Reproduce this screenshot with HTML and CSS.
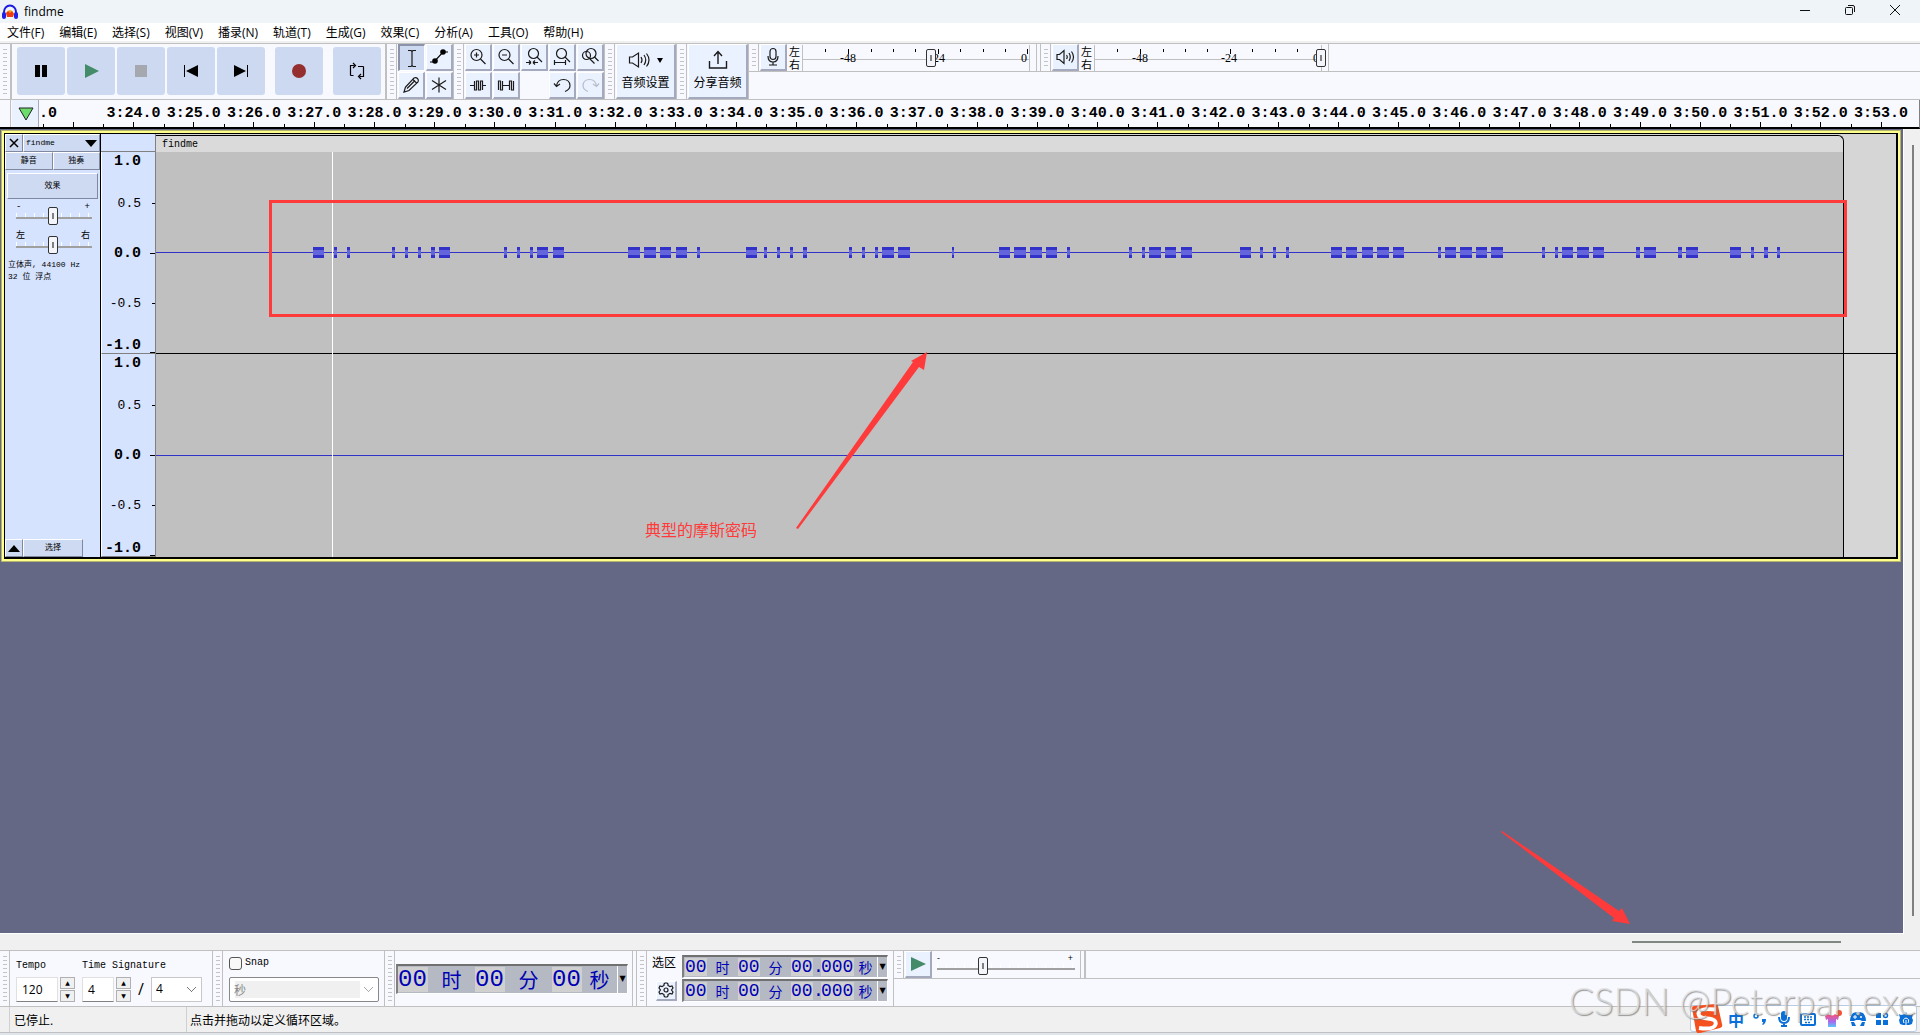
FILE: index.html
```html
<!DOCTYPE html>
<html lang="zh-CN">
<head>
<meta charset="utf-8">
<title>findme</title>
<link rel="stylesheet" href="styles.css">
</head>
<body>
<header class="titlebar">
  <svg class="logo" viewBox="0 0 16 16" width="16" height="16"><path d="M2 10V8a6 6.500 0 0 1 12 0v2" fill="none" stroke="#1c1ce0" stroke-width="2"/><path d="M4 10q4-8 8 0z" fill="#f8a020"/><path d="M4 9l2-2 2 2 2-2 2 3-1 3H5z" fill="#f03c10"/><rect x="0" y="8" width="4" height="7" rx="2" fill="#2020e8"/><rect x="12" y="8" width="4" height="7" rx="2" fill="#2020e8"/></svg>
  <h1 class="title">findme</h1>
  <div class="window-buttons">
    <button aria-label="最小化"><svg width="12" height="12" viewBox="0 0 12 12"><path d="M1 6.500h10"/></svg></button>
    <button aria-label="还原"><svg width="12" height="12" viewBox="0 0 12 12"><rect x="1.500" y="3.500" width="7" height="7" rx="1"/><path d="M4 1.500h5q1.500 0 1.500 1.500v5"/></svg></button>
    <button aria-label="关闭"><svg width="12" height="12" viewBox="0 0 12 12"><path d="M1 1l10 10M11 1L1 11"/></svg></button>
  </div>
</header>
<nav class="menu">
  <a href="#">文件(F)</a><a href="#">编辑(E)</a><a href="#">选择(S)</a><a href="#">视图(V)</a><a href="#">播录(N)</a><a href="#">轨道(T)</a><a href="#">生成(G)</a><a href="#">效果(C)</a><a href="#">分析(A)</a><a href="#">工具(O)</a><a href="#">帮助(H)</a>
</nav>

<section class="toolbars">
  <div class="bar transport">
    <i class="grip"></i>
    <div class="transport-buttons">
      <button class="big" aria-label="暂停"><svg width="18" height="18"><path d="M3 3h5v12H3zM10 3h5v12h-5z"/></svg></button>
      <button class="big" aria-label="播放"><svg width="18" height="18"><path d="M3 2l14 7-14 7z" fill="#448b6a"/></svg></button>
      <button class="big" aria-label="停止"><svg width="18" height="18"><path d="M3 3h12v12H3z" fill="#a5a8ae"/></svg></button>
      <button class="big" aria-label="跳至开头"><svg width="18" height="18"><path d="M2 3h1v12H2zM16 3v12L4 9z"/></svg></button>
      <button class="big" aria-label="跳至结尾"><svg width="18" height="18"><path d="M15 3h1v12h-1zM2 3v12l12-6z"/></svg></button>
      <button class="big apart" aria-label="录制"><svg width="18" height="18"><circle cx="9" cy="9" r="7" fill="#942e2f"/></svg></button>
      <button class="big apart" aria-label="循环"><svg width="18" height="18" fill="none" stroke="#000" stroke-width="1.200"><path d="M2.500 13.500V3.500h4M5 1l2.500 2.500L5 6M2.500 13.500h3M15.500 4.500v10h-4M13 12l-2.500 2.500L13 17M10 4.500h5.500"/></svg></button>
    </div>
  </div>
  <div class="bar">
    <i class="grip"></i>
    <div class="grid two">
      <button class="tool on" aria-label="选择工具"><svg class="line" width="20" height="20"><path d="M6 2.500h3l1 1 1-1h3M10 3.500v14M6 18.500h3l1-1 1 1h3"/></svg></button>
      <button class="tool" aria-label="包络工具"><svg width="20" height="20"><path d="M1 15h4L14 5h5" fill="none" stroke="#000" stroke-width="1.200"/><circle cx="6" cy="14" r="2.800"/><circle cx="14" cy="5" r="2.800"/></svg></button>
      <button class="tool" aria-label="绘制工具"><svg class="line" width="20" height="20"><path d="M3 17l1.500-5L13 3q2-1 3.500.5T17 7l-9 8.500zM12 4.500L15.500 8M6 13.500l8-8"/></svg></button>
      <button class="tool" aria-label="多功能工具"><svg class="line" width="20" height="20"><path d="M10 2.500v15M3 5.500l14 9M17 5.500l-14 9"/></svg></button>
    </div>
  </div>
  <div class="bar">
    <i class="grip"></i>
    <div class="grid five">
      <button class="tool" aria-label="放大"><svg class="line" width="20" height="20"><circle cx="8.500" cy="8" r="5.500"/><path d="M12.500 12l5 5M6 8h5M8.500 5.500v5"/></svg></button>
      <button class="tool" aria-label="缩小"><svg class="line" width="20" height="20"><circle cx="8.500" cy="8" r="5.500"/><path d="M12.500 12l5 5M6 8h5"/></svg></button>
      <button class="tool" aria-label="适应选区"><svg class="line" width="20" height="20"><circle cx="9.500" cy="6.500" r="5"/><path d="M13 10l5 5M2 15.500h5M7 15.500l-2-2M7 15.500l-2 2M9 15.500h5M9 15.500l2-2M9 15.500l2 2"/></svg></button>
      <button class="tool" aria-label="适应宽度"><svg class="line" width="20" height="20"><circle cx="9.500" cy="6.500" r="5"/><path d="M13 10l5 5M2.500 13v5M13.500 13v5M2.500 15.500h11"/></svg></button>
      <button class="tool" aria-label="缩放切换"><svg class="line" width="20" height="20"><circle cx="11" cy="6.500" r="5"/><circle cx="6.500" cy="8.500" r="4"/><path d="M14.500 10l4 4M9.500 11.500l5 5"/></svg></button>
      <button class="tool" aria-label="修剪"><svg class="line" width="20" height="20"><path d="M2 10.500h4.500M14.500 10.500H18M6.500 6v9h2V6h2v9h2V6h2v9"/></svg></button>
      <button class="tool" aria-label="静音选区"><svg class="line" width="20" height="20"><path d="M2.500 15V6h2v9h2V6M6.500 10.500h7M13.500 15V6h2v9h2V6"/></svg></button>
      <span></span>
      <button class="tool" aria-label="撤销"><svg class="line" width="20" height="20"><path d="M4.500 11q1-6.500 7-6.500t6.500 6q0 4-5 6M2 8.500l2.500 3L8 9"/></svg></button>
      <button class="tool" aria-label="重做"><svg class="line faded" width="20" height="20"><path d="M16.500 11q-1-6.500-7-6.500t-6.500 6q0 4 5 6M19 8.500l-2.500 3L13 9"/></svg></button>
    </div>
  </div>
  <div class="bar">
    <i class="grip"></i>
    <button class="tall"><svg class="line" width="40" height="22"><path d="M3.500 8v6h3l6 4V4l-6 4zM15 8q2 3 0 6M18 6q3.500 5 0 10M20.500 4.500q5 6.500 0 13"/><path d="M31 9h6l-3 5z" fill="#000" stroke="none"/></svg><span>音频设置</span></button>
  </div>
  <div class="bar">
    <i class="grip"></i>
    <button class="tall"><svg class="line" width="40" height="22"><path d="M11.500 12v7h17v-7M20 15V3M16 7l4-4.500L24 7" stroke-width="1.400"/></svg><span>分享音频</span></button>
  </div>
  <div class="meters">
    <div class="meter-row">
      <div class="bar meter-bar">
        <i class="grip"></i>
        <button class="tool" aria-label="录音电平"><svg class="line" width="20" height="20"><rect x="7" y="1.500" width="6" height="11" rx="3"/><path d="M5 9q0 6 5 6t5-6M10 15v3M6 18h8"/></svg></button>
        <div class="lr"><span>左</span><span>右</span></div>
        <div class="meter">
          <svg width="228" height="26"><path class="rule" d="M.5 0v26M0 14.500h228M227.500 0v26"/><path class="ticks" d="M23.500 4v3M46.500 4v5M69.500 4v3M91.500 4v3M113.500 4v3M136.500 4v5M158.500 4v3M181.500 4v3M203.500 4v3M225.500 4v5"/><text x="46" y="17">-48</text><text x="135" y="17">-24</text><text x="222" y="17">0</text></svg>
          <input type="range" aria-label="录音音量" value="56">
        </div>
      </div>
      <div class="bar meter-bar">
        <i class="grip"></i>
        <button class="tool" aria-label="播放电平"><svg class="line" width="20" height="20"><path d="M2 7.500v5h2.500l4.500 4v-13l-4.500 4zM11.500 8q1.500 2 0 4M14 6q2.500 4 0 8M16.500 4.500q4 5.500 0 11"/></svg></button>
        <div class="lr"><span>左</span><span>右</span></div>
        <div class="meter">
          <svg width="228" height="26"><path class="rule" d="M.5 0v26M0 14.500h228M227.500 0v26"/><path class="ticks" d="M23.500 4v3M46.500 4v5M69.500 4v3M91.500 4v3M113.500 4v3M136.500 4v5M158.500 4v3M181.500 4v3M203.500 4v3M225.500 4v5"/><text x="46" y="17">-48</text><text x="135" y="17">-24</text><text x="222" y="17">0</text></svg>
          <input type="range" aria-label="播放音量" value="100">
        </div>
      </div>
    </div>
  </div>
</section>

<section class="timeline">
  <button class="pin" aria-label="固定播放头"><svg width="16" height="16"><path d="M1 2h14L8 14z" fill="#6cdc6c" stroke="#222"/></svg></button>
  <span class="cut">.0</span>
  <ol class="seconds">
    <li></li><li>3:24.0</li><li>3:25.0</li><li>3:26.0</li><li>3:27.0</li><li>3:28.0</li><li>3:29.0</li><li>3:30.0</li><li>3:31.0</li><li>3:32.0</li><li>3:33.0</li><li>3:34.0</li><li>3:35.0</li><li>3:36.0</li><li>3:37.0</li><li>3:38.0</li><li>3:39.0</li><li>3:40.0</li><li>3:41.0</li><li>3:42.0</li><li>3:43.0</li><li>3:44.0</li><li>3:45.0</li><li>3:46.0</li><li>3:47.0</li><li>3:48.0</li><li>3:49.0</li><li>3:50.0</li><li>3:51.0</li><li>3:52.0</li><li>3:53.0</li>
  </ol>
</section>

<main class="workspace">
  <div class="tracks">
    <article class="track">
      <aside class="panel">
        <div class="panel-row">
          <button class="flat close" aria-label="关闭轨道"><svg width="10" height="10"><path d="M1 1l8 8M9 1L1 9" stroke="#000" stroke-width="1.500"/></svg></button>
          <button class="flat name"><span>findme</span><svg width="12" height="7"><path d="M0 0h12L6 7z"/></svg></button>
        </div>
        <div class="panel-row halves"><button class="flat">静音</button><button class="flat">独奏</button></div>
        <button class="flat effects">效果</button>
        <label class="knob"><span>-</span><span>+</span><input type="range" aria-label="增益" value="48"></label>
        <label class="knob"><span>左</span><span>右</span><input type="range" aria-label="声像" value="48"></label>
        <p class="info">立体声, 44100 Hz<br>32 位 浮点</p>
        <div class="panel-row foot">
          <button class="flat close" aria-label="折叠"><svg width="12" height="7"><path d="M0 7h12L6 0z"/></svg></button>
          <button class="flat choose">选择</button>
        </div>
      </aside>
      <div class="scales">
        <div class="scale-head"></div>
        <div class="scale"><b>1.0</b><span>0.5</span><b>0.0</b><span>-0.5</span><b>-1.0</b></div>
        <div class="scale"><b>1.0</b><span>0.5</span><b>0.0</b><span>-0.5</span><b>-1.0</b></div>
      </div>
      <div class="clip">
        <div class="clip-name">findme</div><div></div>
        <div class="channel">
          <svg class="wave" viewBox="0 0 1687 11" preserveAspectRatio="none">
            <defs><path id="pulses" d="M157 5.500h11M178 5.500h3M191 5.500h3M236 5.500h3M249 5.500h3M262 5.500h3M275 5.500h4M283 5.500h11M348 5.500h3M361 5.500h3M374 5.500h3M381 5.500h11M397 5.500h11M472 5.500h12M488 5.500h12M504 5.500h11M520 5.500h11M541 5.500h3M590 5.500h11M608 5.500h3M621 5.500h3M634 5.500h3M647 5.500h4M693 5.500h3M706 5.500h3M719 5.500h3M726 5.500h12M742 5.500h12M796 5.500h2M843 5.500h11M858 5.500h12M874 5.500h12M890 5.500h11M911 5.500h3M973 5.500h3M986 5.500h3M993 5.500h12M1009 5.500h11M1025 5.500h11M1084 5.500h11M1104 5.500h3M1117 5.500h3M1130 5.500h3M1175 5.500h11M1190 5.500h11M1206 5.500h11M1221 5.500h12M1237 5.500h11M1282 5.500h3M1289 5.500h11M1304 5.500h12M1320 5.500h11M1335 5.500h12M1386 5.500h3M1399 5.500h3M1406 5.500h11M1421 5.500h12M1437 5.500h11M1480 5.500h4M1488 5.500h12M1522 5.500h4M1530 5.500h12M1574 5.500h11M1595 5.500h3M1608 5.500h4M1621 5.500h3"/></defs>
            <path d="M0 5.500h1687" stroke="#3232c8"/>
            <use href="#pulses" stroke="#3232c8" stroke-width="11"/>
            <use href="#pulses" stroke="#6464dc" stroke-width="5"/>
          </svg>
        </div><div class="after"></div>
        <div class="channel last"><i class="silence"></i></div><div></div>
        <i class="cursor"></i>
      </div>
    </article>
  </div>
  <i class="vthumb"></i>
  <div class="hscroll"><i class="hthumb"></i></div>
  <svg class="notes" viewBox="0 129 1920 821" preserveAspectRatio="none">
    <rect x="270.500" y="201.500" width="1575" height="114" fill="none" stroke="#ff3a3a" stroke-width="3"/>
    <path d="M796 528L913 362L911 361L927 352L924 370L919 367L798 529Z" fill="#ff3a3a"/>
    <path d="M1502 831L1619 911L1622 908L1630 924L1612 921L1614 918L1501 832Z" fill="#ff3a3a"/>
    <text x="645" y="536">典型的摩斯密码</text>
  </svg>
</main>

<section class="toolbars bottom">
  <div class="bar">
    <i class="grip"></i>
    <div class="signature">
      <label for="tempo">Tempo</label><label for="beats">Time Signature</label>
      <div class="fields">
        <input id="tempo" class="num wide" value="120"><span class="spin"><button aria-label="加">▲</button><button aria-label="减">▼</button></span>
      </div>
      <div class="fields">
        <input id="beats" class="num" value="4"><span class="spin"><button aria-label="加">▲</button><button aria-label="减">▼</button></span>
        <span class="slash">/</span>
        <select class="beat" aria-label="音符"><option>4</option></select>
      </div>
    </div>
  </div>
  <div class="bar">
    <i class="grip"></i>
    <div class="snap">
      <label><input type="checkbox">Snap</label>
      <select class="unit" aria-label="对齐单位" disabled><option>秒</option></select>
    </div>
  </div>
  <div class="bar time-bar">
    <i class="grip"></i>
    <div class="time large"><b>00</b><i>时</i><b>00</b><i>分</i><b>00</b><i>秒</i><button aria-label="格式">▼</button></div>
  </div>
  <div class="bar selection-bar">
    <i class="grip"></i>
    <div class="selection">
      <span class="sel-label">选区</span>
      <div class="time"><b>00</b><i>时</i><b>00</b><i>分</i><b>00</b><em>.</em><b>000</b><i>秒</i><button aria-label="格式">▼</button></div>
      <button class="gear" aria-label="选区设置"><svg class="line" width="16" height="16"><circle cx="8" cy="8" r="2"/><path d="M6 2l1-1h2l1 1v1.500l2 1L14 4l1 2-1.500 2L15 10l-1 2-2-.5-2 1V14l-1 1H7l-1-1v-1.500l-2-1-2 .5-1-2 1.500-2L1 6l1-2 2 .5 2-1z"/></svg></button>
      <div class="time"><b>00</b><i>时</i><b>00</b><i>分</i><b>00</b><em>.</em><b>000</b><i>秒</i><button aria-label="格式">▼</button></div>
    </div>
  </div>
  <div class="meters">
    <div class="meter-row">
      <div class="bar speed-bar">
        <i class="grip"></i>
        <button class="tool" aria-label="变速播放"><svg width="20" height="20"><path d="M3 3l15 7-15 7z" fill="#448b6a"/></svg></button>
        <label class="knob speed"><span>-</span><span>+</span><input type="range" aria-label="播放速度" value="32"></label>
      </div>
      <div class="bar stub"></div>
    </div>
  </div>
</section>

<footer class="status"><span class="state">已停止.</span><span>点击并拖动以定义循环区域。</span></footer>

<div class="ime">
  <svg class="sogou" width="32" height="30" viewBox="0 0 32 30"><path d="M1 4q0-2 2-2L24 0q3 0 3 2l4 18q1 3-2 4L9 29q-3 1-4-2z" fill="#f4511e"/><path d="M25 5.500Q8 4 7.500 9t9 5.500 8 6T8 24" fill="none" stroke="#fff" stroke-width="4"/></svg>
  <span class="zhong">中</span>
  <svg width="16" height="16"><circle cx="4" cy="5" r="2" fill="none" stroke="#0a6fd8" stroke-width="1.500"/><path d="M10 8h4q0 4-3 6l-1-1q2-1 1-2h-1z" fill="#0a6fd8"/></svg>
  <svg width="16" height="16"><rect x="5" y="0" width="6" height="10" rx="3" fill="#0a6fd8"/><path d="M3 6q0 6 5 6t5-6M8 12v2M5 15h6" fill="none" stroke="#0a6fd8" stroke-width="2"/></svg>
  <svg width="16" height="16"><rect x="1" y="3" width="14" height="11" rx="1" fill="none" stroke="#0a6fd8" stroke-width="2"/><path d="M4 6h8M4 8.500h8M5 11.500h6" stroke="#0a6fd8" stroke-width="1.500" stroke-dasharray="2 1"/></svg>
  <svg width="18" height="18"><defs><linearGradient id="shirt" x2="0" y2="1"><stop offset="0" stop-color="#ff4f6d"/><stop offset=".6" stop-color="#a76cf0"/><stop offset="1" stop-color="#58c8f8"/></linearGradient></defs><path d="M1 6l4-2q3 3 6 0l4 2-1 4-2-1v8H4V9l-2 1z" fill="url(#shirt)"/><circle cx="15" cy="3" r="3" fill="#ff5030"/></svg>
  <svg width="16" height="16"><path d="M3 2q5-2 10 0 3 3 3 8h-4l-2-1H6l-2 1H0Q0 5 3 2zM1 11h3l2 4H2zM12 11h3l-1 4h-4z" fill="#0a6fd8"/><path d="M3 6h4M5 4v4" stroke="#fff"/><circle cx="11" cy="6" r="1" fill="#fff"/></svg>
  <svg width="16" height="16"><path d="M2 2h5v5H2zM2 9h5v5H2zM9 9h5v5H9z" fill="#0a6fd8"/><circle cx="11.500" cy="4.500" r="2" fill="none" stroke="#0a6fd8" stroke-width="1.500"/></svg>
  <svg width="16" height="16"><path d="M8 1l1 2 4 1 2-1-1 4 1 2-1 4-3 1H5l-3-1-1-4 1-2-1-4 2 1 4-1z" fill="#0a6fd8"/><path d="M6 12Q4 8 8 7q4 1 2 5M8 9v5" fill="none" stroke="#fff"/></svg>
</div>
<div class="watermark">CSDN @Peterpan.exe</div>
</body>
</html>
```
FILE: styles.css
```css
* { box-sizing: border-box; }
body {
  margin: 0;
  min-height: 100vh;
  display: flex;
  flex-direction: column;
  position: relative;
  overflow: hidden;
  background: #f0f0f0;
  color: #000;
  font: 12px/16px "Open Sans", "Noto Sans CJK SC", sans-serif;
  border-bottom: 2px solid #dfe5ea;
}
button, input, select { font: inherit; color: inherit; margin: 0; padding: 0; border: 0; border-radius: 0; }
button { background: none; }
svg { display: block; flex: none; }
i, em { font-style: normal; }
.line { fill: none; stroke: #1a1a1a; stroke-width: 1.2; }
.faded { stroke: #b8bcc8; }

.titlebar { height: 23px; display: flex; align-items: center; background: #eff4f8; padding: 0 2px; }
.title { margin: 0 auto 0 6px; font: inherit; }
.window-buttons { display: flex; gap: 33px; margin-right: 17px; align-self: flex-start; padding-top: 4px; }
.window-buttons svg { fill: none; stroke: #111; }
.menu { display: flex; gap: 15px; height: 20px; padding-left: 7px; background: #fff; border-bottom: 2px solid #f0f0f0; line-height: 20px; }
.menu a { color: #000; text-decoration: none; }

.toolbars { display: flex; height: 57px; flex: none; background: #f8f9ff; border-top: 1px solid #c0c0c0; border-bottom: 1px solid #c0c0c0; }
.bar { display: flex; align-items: center; flex: none; border-right: 1px solid #c0c0c0; }
.grip {
  width: 10px; align-self: stretch; flex: none; border-right: 1px solid #c0c0c0;
  background: repeating-linear-gradient(#c4c4c8 0 1px, transparent 1px 4px) 3px 5px / 4px calc(100% - 9px) no-repeat;
}
.transport { border-right-width: 2px; }
.transport .grip { width: 12px; border-right-width: 2px; }
.transport-buttons { display: flex; gap: 2px; padding: 0 4px 2px 5px; }
.big { width: 48px; height: 48px; border-radius: 3px; background: #ccd9f1; display: grid; place-items: center; }
.apart { margin-left: 8px; }
.grid { display: grid; gap: 1px; padding-left: 1px; align-self: start; }
.two { grid-template-columns: repeat(2, 27px); }
.five { grid-template-columns: repeat(5, 27px); }
.tool, .tall, .gear {
  background: #ebf2ff; border: solid; border-width: 1px 2px 2px 1px;
  border-color: #fff #a4a9bd #a4a9bd #fff; display: grid; place-items: center;
}
.tool { width: 27px; height: 27px; flex: none; }
.on { background: #ccd9f1; border-width: 2px 1px 1px 2px; border-color: #8c93a8 #fff #fff #8c93a8; }
.tall { width: 60px; height: 55px; margin-left: 1px; align-content: center; line-height: 20px; gap: 2px; }
.meters { flex: 1; }
.meter-row { display: flex; gap: 3px; height: 28px; border-bottom: 1px solid #c0c0c0; }
.meter-bar { padding-right: 6px; position: relative; }
.meter-bar + .meter-bar, .stub { border-left: 1px solid #c0c0c0; }
.meter-bar .tool, .speed-bar .tool { margin-left: 1px; }
.lr { display: grid; font-size: 11px; line-height: 13px; margin: 0 2px; }
.meter { position: relative; }
.rule { stroke: #c0c0c0; }
.ticks { stroke: #000; }
.meter text { font: 12px "Liberation Serif", serif; text-anchor: middle; }
.meter input { position: absolute; left: 0; top: 4px; width: 232px; }

input[type="range"] { -webkit-appearance: none; appearance: none; background: transparent; height: 19px; }
input[type="range"]::-webkit-slider-thumb {
  -webkit-appearance: none; width: 10px; height: 18px; border: 1px solid #333; border-radius: 2px;
  background: linear-gradient(#808080, #808080) center / 2px 6px no-repeat, #f4f5fa;
}

.timeline { display: flex; position: relative; height: 29px; flex: none; background: #f8f9ff; border-bottom: 2px solid #000; border-right: 1px solid #808080; padding-left: 12px; font: bold 15px/28px "Liberation Mono", monospace; }
.pin { width: 27px; padding-left: 2px; border-right: 1px solid #a4a9bd; background: #ebf2ff; display: grid; place-items: center; }
.timeline::before { content: ""; position: absolute; left: 10px; top: 0; bottom: 0; border-left: 1px solid #c0c0c0; }
.cut { width: 4px; white-space: nowrap; }
.seconds { display: flex; flex: 1; margin: 0 8px 0 0; padding: 0; list-style: none; }
.seconds li {
  flex: 1; height: 27px; text-align: center;
  background: linear-gradient(#000, #000) left bottom / 1px 3px no-repeat, linear-gradient(#000, #000) center bottom / 1px 5px no-repeat;
}

.workspace { flex: 1; position: relative; display: grid; grid-template-columns: 1fr 16px; grid-template-rows: 1fr 16px; min-height: 600px; }
.tracks { background: #646885; border-right: 1px solid #fff; border-bottom: 1px solid #fff; padding: 1px 2px 0 1px; }
.track {
  display: grid; grid-template-columns: 96px 55px 1fr; height: 432px;
  border: 3px solid #ffff8c; outline: 1px solid #b4b46e; outline-offset: -1px; padding: 1px 2px 2px 1px;
  background: #000;
}
.panel { background: #d6e3ff; border-right: 1px solid #000; display: flex; flex-direction: column; font: 8px/12px "Liberation Mono", "Noto Sans CJK SC", monospace; }
.flat { background: #cedaf2; border: solid; border-width: 1px; border-color: #fff #8088a0 #8088a0 #fff; height: 18px; display: grid; place-items: center; }
.panel-row { display: flex; flex: none; }
.close { width: 18px; }
.name { flex: 1; display: flex; align-items: center; justify-content: space-between; padding: 0 2px; }
.halves .flat { flex: 1; }
.effects { height: 26px; margin: 3px 2px 0; }
.knob { display: grid; grid-template-columns: 1fr 1fr; margin: 4px 8px 0 11px; line-height: 8px; }
.knob span { font-size: 9px; }
.knob span + span { text-align: right; padding-right: 2px; }
.knob input {
  grid-column: 1 / 3; width: 100%; margin-top: -5px;
  background:
    linear-gradient(#a0a0a0, #a0a0a0) 0 11px / 100% 2px no-repeat,
    repeating-linear-gradient(90deg, #fff 0 1px, transparent 1px 9px) 0 7px / 100% 4px no-repeat;
}
.knob + .knob { margin-top: 7px; }
.info { margin: 5px 3px; }
.foot { margin-top: auto; width: 78px; }
.choose { flex: 1; }

.scales { background: #d6e3ff; border-right: 1px solid #808080; display: grid; grid-template-rows: 18px 202px 1fr; font: 13px/18px "Liberation Mono", monospace; }
.scale-head { border-bottom: 1px solid #808080; }
.scale { display: grid; grid-template-rows: 26px 50px 50px 50px 1fr; border-bottom: 1px solid #808080; border-left: 1px solid #fff; }
.scale > * { display: grid; align-items: center; justify-items: end; padding: 2px 14px 0 0; background: linear-gradient(#000, #000) right center / 3px 1px no-repeat; }
.scale b { font-size: 15px; background-size: 5px 1px; }
.scale b:first-child { align-items: start; padding-top: 1px; background: none; }
.scale b:last-child { align-items: end; line-height: 14px; background-position: right bottom; }

.clip { position: relative; display: grid; grid-template-columns: 1fr 52px; grid-template-rows: 18px 202px 1fr; background: #d6d6d6; min-width: 0; }
.clip-name { background: #dadada; border: solid #000; border-width: 1px 1px 0 0; border-radius: 0 6px 0 0; padding-left: 6px; margin-top: 1px; font: 10px/18px "Liberation Mono", monospace; height: 17px; }
.channel { background: #c0c0c0; border-right: 1px solid #000; border-bottom: 1px solid #000; display: flex; align-items: center; min-width: 0; }
.last { border-bottom: 0; }
.after { border-bottom: 1px solid #000; }
.wave { width: 100%; height: 11px; flex: 1; }
.silence { flex: 1; border-top: 1px solid #3232c8; }
.cursor { position: absolute; left: 176px; top: 18px; bottom: 0; width: 1px; background: #fff; }

.vthumb { width: 2px; margin: 16px 0 18px 8px; background: #808080; }
.hscroll { display: grid; align-items: center; grid-column: 1 / 3; }
.hthumb { height: 2px; width: 209px; margin-left: 85%; background: #808680; }
.notes { position: absolute; inset: 0; width: 100%; height: 100%; pointer-events: none; }
.notes text { font: 16px "Noto Sans CJK SC", sans-serif; fill: #ff3a3a; }

.signature { display: grid; grid-template-columns: 66px 1fr; padding: 0 10px 0 6px; row-gap: 1px; font: 10px/20px "Liberation Mono", monospace; }
.fields { display: flex; gap: 2px; align-items: center; font: 12px/16px "Open Sans", sans-serif; }
.num { width: 32px; height: 25px; padding-left: 5px; background: #fff; border: 1px solid #e0e0e0; border-bottom-color: #808080; }
.wide { width: 42px; }
.spin { display: grid; gap: 1px; }
.spin button { width: 15px; height: 12px; background: #f0f0f0; border: 1px solid #b0b0b0; font: 6px/8px "DejaVu Sans", sans-serif; }
.slash { width: 16px; text-align: center; font-size: 16px; }
select { -webkit-appearance: none; appearance: none; opacity: 1; }
.beat, .unit {
  height: 25px; padding-left: 4px; border: 1px solid #c8c8c8;
  background: linear-gradient(45deg, transparent 46%, #777 46% 54%, transparent 54%) right 9px center / 5px 5px no-repeat, linear-gradient(-45deg, transparent 46%, #777 46% 54%, transparent 54%) right 5px center / 5px 5px no-repeat, #fff;
}
.beat { width: 51px; }
.snap { display: grid; gap: 6px; padding: 0 5px 0 6px; font: 10px/16px "Liberation Mono", monospace; }
.snap label { display: flex; align-items: center; gap: 3px; }
.snap input { -webkit-appearance: none; appearance: none; width: 13px; height: 13px; border: 1px solid #555; border-radius: 3px; background: #f8f8f8; }
.unit {
  width: 150px; border-color: #888; border-radius: 2px; color: #888; font: 12px/16px "Noto Sans CJK SC", sans-serif;
  background:
    linear-gradient(45deg, transparent 46%, #aaa 46% 54%, transparent 54%) right 9px center / 5px 5px no-repeat,
    linear-gradient(-45deg, transparent 46%, #aaa 46% 54%, transparent 54%) right 5px center / 5px 5px no-repeat,
    linear-gradient(#f0f0f0, #f0f0f0) 5px center / 125px 17px no-repeat, #fff;
}
.time-bar { padding-right: 4px; }
.time { display: flex; align-items: center; width: 206px; height: 23px; padding-left: 1px; background: #b4b9c3; border: solid; border-width: 2px 1px 1px 2px; border-color: #707070 #fff #fff #808080; color: #0000b4; font: 18px/18px "Liberation Mono", monospace; }
.time b { width: 22px; font-weight: 400; background: #d0d0d0; flex: none; }
.time em + b { width: 33px; }
.time em { width: 8px; }
.time i { width: 31px; text-align: center; font: 14px/18px "Noto Sans CJK SC", sans-serif; }
.time i:nth-last-child(2) { flex: 1; }
.time button { width: 10px; align-self: stretch; color: #000; border-left: 1px solid #fff; font: 8px/18px "DejaVu Sans", sans-serif; }
.time.large { width: 232px; height: 30px; margin-left: 1px; padding-left: 0; font-size: 24px; line-height: 25px; }
.large b { width: 30px; }
.large i { width: 47px; font-size: 20px; line-height: 25px; }
.selection-bar { border-left: 1px solid #c0c0c0; margin-left: 3px; padding-right: 5px; }
.selection { display: grid; grid-template-columns: 30px 206px; gap: 1px 0; padding-left: 5px; align-items: center; }
.sel-label { align-self: start; }
.gear { width: 21px; height: 20px; margin-left: 4px; }
.speed-bar { padding-right: 5px; }
.speed { width: 138px; margin: 0 0 0 5px; }

.status { display: flex; height: 26px; flex: none; border-bottom: 1px solid #c0c0c0; line-height: 27px; padding-left: 9px; }
.status span { border-left: 1px solid #d0d0d0; padding-left: 3px; }
.status .state { width: 177px; padding-left: 4px; }

.ime { position: absolute; right: 3px; bottom: 1px; width: 227px; height: 27px; display: flex; align-items: center; gap: 8px; background: #fff; border: 1px solid #b8cce4; border-radius: 3px; }
.sogou { margin-right: -3px; }
.zhong { color: #0a6fd8; font: bold 16px/20px "Noto Sans CJK SC", sans-serif; }
.watermark { position: absolute; right: 3px; bottom: 8px; font: 300 37px/48px Lato, sans-serif; color: rgba(225, 225, 225, .75); text-shadow: 1px 1px 1px rgba(110, 110, 110, .7); }
```
